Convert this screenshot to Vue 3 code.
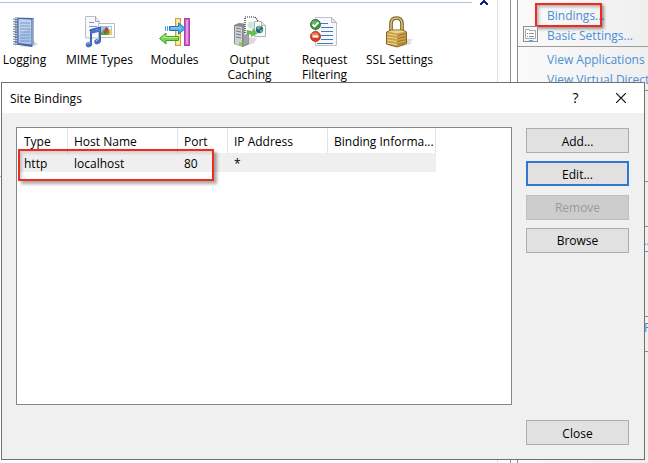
<script setup>
const features = [
  { id: 'logging', label: 'Logging' },
  { id: 'mime', label: 'MIME Types' },
  { id: 'modules', label: 'Modules' },
  { id: 'caching', label: 'Output Caching' },
  { id: 'filtering', label: 'Request Filtering' },
  { id: 'ssl', label: 'SSL Settings' },
]
const columns = ['Type', 'Host Name', 'Port', 'IP Address', 'Binding Informa...']
const bindings = [['http', 'localhost', '80', '*', '']]
</script>

<template>
  <div class="page">
    <main class="features">
      <div class="group-line">
        <span class="rule"></span>
        <svg class="chevron" viewBox="0 0 8 5"><path d="M3 0h2v1h1v1h1v1h1v2H6V4H5V3H3v1H2v1H0V3h1V2h1V1h1z" fill="#14248c" /></svg>
      </div>
      <div class="feature-grid">
        <a v-for="f in features" :key="f.id" class="feature" href="#">
          <svg v-if="f.id === 'logging'" class="icon" viewBox="0 0 32 32">
            <path d="M25 25l4 3-3 2-14 1z" fill="#999" opacity=".35" />
            <path d="M6 1.500L24.500 2v26.500L23 31 6 28.500z" fill="#4d66a5" />
            <path d="M9.500 3L22.500 3.500v25L9.500 27z" fill="#a9c4e6" />
            <path d="M10 3.500L22 4v8L10 19z" fill="#cbdcf1" opacity=".7" />
            <path d="M11 7h10M11 10h10M11 13h10M11 16h10M11 19h10M11 22h10M11 25h10" stroke="#6f91c3" stroke-width=".9" />
            <path d="M8 2v26" stroke="#7e94c7" />
            <path d="M23.500 3v27" stroke="#9aa9d4" stroke-width=".8" />
            <path d="M6 2v27" stroke="#fff" stroke-width="4" stroke-dasharray="1 1.500" />
            <path d="M6 2.500v27" stroke="#7d899f" stroke-width="3.600" stroke-dasharray="1.200 1.300" />
          </svg>
          <svg v-else-if="f.id === 'mime'" class="icon" viewBox="0 0 32 32">
            <path d="M1.500 .5h10l4 5V22h-14z" fill="#f8f9fa" stroke="#bdbfc3" />
            <path d="M11.500 .5v5h4" fill="#e4e6e9" stroke="#a4a7ad" />
            <path d="M5 6.500h5M5 10.500h8M5 14.500h8" stroke="#7895cd" />
            <rect x="14.500" y="7.500" width="16" height="14" fill="#fff" stroke="#b9bec7" />
            <rect x="17" y="10" width="11" height="9" fill="#8fc8ef" />
            <path d="M17 16q3-4 5 0l6-3v6H17z" fill="#e8cf61" />
            <path d="M17 17l3-4 2 3 3-1v4h-8z" fill="#4eaa43" />
            <path d="M20 17l1-5 2-1 3 6-3-2-1 3z" fill="#cb392d" />
            <circle cx="26" cy="12" r="1.200" fill="#fff" />
            <path d="M7 28V14l9-2.500v14" fill="none" stroke="#3e63b5" stroke-width="2" />
            <path d="M7 15l9-2.500v3L7 18z" fill="#5275c1" />
            <ellipse cx="5" cy="28.500" rx="3.300" ry="2.700" fill="#4c70be" transform="rotate(-22 5 28.500)" />
            <ellipse cx="13.500" cy="25.500" rx="3.300" ry="2.700" fill="#4c70be" transform="rotate(-22 13.500 25.500)" />
            <path d="M3.500 28q1-1.500 2.500-1.500M12 25q1-1.500 2.500-1.500" fill="none" stroke="#c3d6fa" />
          </svg>
          <svg v-else-if="f.id === 'modules'" class="icon" viewBox="0 0 32 32">
            <rect x="16.500" y="2.500" width="5" height="27" fill="#f5df79" stroke="#c8a63c" />
            <rect x="18" y="4" width="2" height="24" fill="#fff2ad" />
            <rect x="25.500" y="2.500" width="5" height="27" fill="#c95ac7" stroke="#ad40ab" />
            <rect x="27" y="4" width="2" height="24" fill="#e49ce1" />
            <path d="M10.500 10.500h9V7l7 5.500-7 5.500v-3.500h-9z" fill="#53aeef" stroke="#2674b8" />
            <path d="M12 11.500h9l2 1H12z" fill="#9ad8ff" />
            <path d="M6.500 10v5M8.500 10v5" stroke="#4ba0dd" />
            <path d="M19.500 20.500H7V17L.5 22.500 7 28v-3.500h12.500z" fill="#7cd34e" stroke="#459d26" />
            <path d="M3 22l3-2.500v2h13" fill="none" stroke="#b9ef8e" />
          </svg>
          <svg v-else-if="f.id === 'caching'" class="icon" viewBox="0 0 32 32">
            <path d="M12 30l8-3 3-5-11-1z" fill="#888" opacity=".3" />
            <path d="M0 9l5-2 10 1v20l-6 3L0 28z" fill="#85898d" />
            <path d="M1 10l7 1v19l-7-2z" fill="#cfd2d4" />
            <path d="M9.500 11l5-1.500V27l-5 2.500z" fill="#a0a4a7" />
            <path d="M2 12l5 1M2 15l5 1M2 18l5 1M2 21l5 1" stroke="#777c80" />
            <path d="M5 26l3 .5v3L5 29z" fill="#82db25" />
            <path d="M10.500 19V1.500l2-1h8l4 5V9" fill="#fff" />
            <path d="M11 17V1h10l3 4v2" fill="none" stroke="#222" stroke-width="1.200" stroke-dasharray="1 1" />
            <circle cx="17" cy="9" r="3.500" fill="#cce7f3" />
            <path d="M14 9l3-3 1 3-2 3z" fill="#cceab7" />
            <path d="M20.500 5.500h7l4 4v11h-11z" fill="#fbfcfd" stroke="#aeb3b9" />
            <path d="M27.500 5.500v4h4" fill="#e5e8eb" stroke="#aeb3b9" />
            <circle cx="25.500" cy="13.500" r="3.700" fill="#265ba5" />
            <path d="M22.500 12l2-2h3l-1 2-2 2zM26 14l3-1-1 3-2 1z" fill="#6bc34c" />
            <path d="M13 14.500l6 1v-3l4 5-6 3 1-2-5-1z" fill="#60c54b" stroke="#58a940" stroke-width=".6" />
          </svg>
          <svg v-else-if="f.id === 'filtering'" class="icon" viewBox="0 0 32 32">
            <path d="M6.500 1.500h16l5 5v23h-21z" fill="#f7f8fb" stroke="#c0c2c8" />
            <path d="M22.500 1.500v5h5z" fill="#e1e3e9" stroke="#b9bbc2" />
            <path d="M12 7.500h7M12 11.500h12M12 15.500h12M12 19.500h12M12 23.500h12M8 27.500h16" stroke="#4779b9" stroke-width="1.200" />
            <circle cx="6.500" cy="8.500" r="5" fill="#369344" stroke="#337c3b" />
            <ellipse cx="6" cy="6.500" rx="3.500" ry="2" fill="#7ebd7f" opacity=".7" />
            <path d="M3.500 8.500l2 2 4-4" fill="none" stroke="#fff" stroke-width="1.800" />
            <circle cx="6.500" cy="20.500" r="5" fill="#d83d20" stroke="#bd4027" />
            <ellipse cx="6" cy="18.500" rx="3.500" ry="2" fill="#ef9776" opacity=".7" />
            <path d="M3.500 20.500h6" stroke="#fff" stroke-width="2.200" />
          </svg>
          <svg v-else class="icon" viewBox="0 0 32 32">
            <path d="M22 23h7l-3 3 2 1-4 2-9 2z" fill="#777" opacity=".25" />
            <path d="M7 17V8q0-6 5.500-6T18 8v9" fill="none" stroke="#735a22" stroke-width="3.600" />
            <path d="M7 16V8q0-6 5.500-6T18 8v8" fill="none" stroke="#dcc47a" stroke-width="1.600" />
            <path d="M2.500 16l5-2H19l3.500 2v11.500L13 31 2.500 28z" fill="#c9a148" stroke="#86611c" />
            <path d="M4 15.500l4-1h10l3 1-8 2z" fill="#ecd58b" />
            <path d="M3 18l10 1.500M3 21l10 1.500M3 24l10 1.500M3 27l10 1.500" stroke="#efd58a" />
            <path d="M13.500 19.500l9-2M13.500 22.500l9-2M13.500 25.500l9-2M13.500 28.500l9-2" stroke="#9c762c" />
          </svg>
          <span>{{ f.label }}</span>
        </a>
      </div>
      <div class="lower-line"></div>
    </main>

    <aside class="actions">
      <nav class="first">
        <a class="action marked" href="#">Bindings...</a>
        <a class="action" href="#">
          <svg class="settings-icon" viewBox="0 0 15 16">
            <rect x=".5" y=".5" width="14" height="15" fill="#f5f6f7" stroke="#8d9297" />
            <path d="M2.500 3.500h4v1h6v8h-10z" fill="#fff" stroke="#a3a8ac" />
            <path d="M4 7.500h1M6 7.500h5M4 10.500h1M6 10.500h5" stroke="#8b9297" />
            <path d="M6 14.500h4" stroke="#3fb1e9" />
          </svg>Basic Settings...</a>
      </nav>
      <nav class="views">
        <a class="action" href="#">View Applications</a>
        <a class="action" href="#">View Virtual Directories</a>
      </nav>
      <div class="block block-a"></div>
      <div class="block block-b"></div>
      <div class="block block-c"><a class="edge" href="#">...</a></div>
      <div class="block block-d"></div>
      <div class="block block-e"><a class="edge end" href="#">F</a></div>
      <div class="block"></div>
    </aside>

    <section class="dialog" role="dialog" aria-labelledby="dialog-title">
      <header class="titlebar">
        <h1 id="dialog-title">Site Bindings</h1>
        <button class="caption" type="button" aria-label="Help">?</button>
        <button class="caption" type="button" aria-label="Close window">
          <svg class="cross" viewBox="0 0 10 10"><path d="M0 0l10 10M10 0L0 10" stroke="#111" stroke-width="1.200" /></svg>
        </button>
      </header>
      <div class="content">
        <div class="list">
          <table>
            <colgroup><col class="c1" /><col class="c2" /><col class="c1" /><col class="c4" /><col class="c5" /></colgroup>
            <thead>
              <tr><th v-for="c in columns" :key="c" scope="col">{{ c }}</th></tr>
            </thead>
            <tbody>
              <tr v-for="(row, i) in bindings" :key="i">
                <td v-for="(cell, j) in row" :key="j">{{ cell }}</td>
              </tr>
            </tbody>
          </table>
          <div class="highlight"></div>
        </div>
        <div class="side">
          <div class="buttons">
            <button class="btn" type="button">Add...</button>
            <button class="btn primary" type="button">Edit...</button>
            <button class="btn" type="button" disabled>Remove</button>
            <button class="btn" type="button">Browse</button>
          </div>
          <button class="btn" type="button">Close</button>
        </div>
      </div>
    </section>
  </div>
</template>

<style>
body {
  margin: 0;
}
</style>

<style scoped>
*,
*::after {
  box-sizing: border-box;
}
.page {
  position: relative;
  display: flex;
  height: 100vh;
  overflow: hidden;
  background: #fff;
  color: #000;
  font: 12px/15px "Segoe UI", "Open Sans", "Noto Sans", sans-serif;
}
a {
  color: inherit;
  text-decoration: none;
}
.features {
  flex: 1;
  min-width: 0;
  margin-right: 12px;
  border-right: 1px solid #dcdfe9;
  overflow: hidden;
}
.group-line {
  display: flex;
  gap: 8px;
  height: 16px;
  padding-right: 9px;
}
.rule {
  flex: 1;
  height: 3px;
  border-bottom: 1px solid #b2c1e6;
}
.chevron {
  width: 8px;
  height: 5px;
}
.feature-grid {
  display: grid;
  grid-template-columns: repeat(6, 75px);
  margin-left: -13px;
}
.feature {
  display: flex;
  flex-direction: column;
  align-items: center;
  gap: 4px;
  padding: 0 10px;
  text-align: center;
}
.feature span {
  width: min-content;
}
.feature:nth-child(2) span,
.feature:nth-child(6) span {
  white-space: nowrap;
}
.icon {
  width: 32px;
  height: 32px;
  flex: none;
}
.lower-line {
  margin-top: 94px;
  border-top: 1px solid #9fc3e6;
}
.actions {
  width: 138px;
  flex: none;
  border-left: 1px solid #8c8c8c;
  padding-left: 6px;
  background: #fff;
  color: #4a8fd6;
  overflow: hidden;
}
.first,
.views,
.block {
  border-left: 1px solid #8c8c8c;
  background: linear-gradient(90deg, #fafafa, #efefef);
}
.first {
  height: 46px;
  padding-top: 6px;
}
.views {
  height: 44px;
  padding-top: 3px;
  border-top: 1px solid #9c9c9c;
}
.action {
  position: relative;
  display: block;
  height: 20px;
  padding-left: 29px;
  line-height: 20px;
  white-space: nowrap;
}
.marked::after {
  content: "";
  position: absolute;
  left: 17px;
  top: -3px;
  width: 67px;
  height: 24px;
  border: 2px solid #ee2b1c;
  box-shadow: 2px 2px 3px #0006, inset 2px 2px 3px #0004;
}
.settings-icon {
  position: absolute;
  left: 5px;
  top: 0;
  width: 15px;
  height: 16px;
}
.block {
  border-top: 1px solid #8c8c8c;
  min-height: 112px;
}
.block-a {
  height: 91px;
  min-height: 0;
}
.block-b {
  height: 45px;
  min-height: 0;
}
.block-c {
  height: 25px;
  min-height: 0;
  padding-top: 6px;
}
.block-d {
  height: 65px;
  min-height: 0;
}
.block-e {
  height: 35px;
  min-height: 0;
  padding-top: 3px;
}
.edge {
  display: block;
  padding-left: 122px;
}
.end {
  padding-left: 126px;
}
.dialog {
  position: absolute;
  inset: 82px 3px 3px 1px;
  display: flex;
  flex-direction: column;
  border: 1px solid #707070;
  background: #f0f0f0;
}
.titlebar {
  display: flex;
  align-items: center;
  height: 30px;
  padding: 0 1px 0 8px;
  background: #fff;
}
h1 {
  flex: 1;
  margin: 0;
  font: inherit;
}
.caption {
  width: 45px;
  height: 30px;
  padding: 0;
  border: 0;
  background: none;
  color: #000;
  font: 14px/28px "Segoe UI", "Open Sans", sans-serif;
}
.cross {
  width: 10px;
  height: 10px;
}
.content {
  flex: 1;
  display: flex;
  gap: 14px;
  padding: 14px 15px 14px 14px;
}
.list {
  position: relative;
  flex: 1;
  margin-bottom: 40px;
  padding: 0 1px;
  border: 1px solid #828790;
  background: #fff;
}
table {
  width: 418px;
  table-layout: fixed;
  border-collapse: collapse;
}
.c1 {
  width: 50px;
}
.c2 {
  width: 110px;
}
.c4 {
  width: 100px;
}
.c5 {
  width: 108px;
}
th,
td {
  padding: 0 0 0 6px;
  font-weight: 400;
  text-align: left;
  white-space: nowrap;
}
th {
  height: 25px;
  padding-top: 2px;
  background: linear-gradient(#e4e4e4, #e4e4e4) right / 1px 100% no-repeat;
}
td {
  height: 19px;
  padding-top: 1px;
  background: #efefef;
}
.highlight {
  position: absolute;
  left: 1px;
  top: 21px;
  width: 196px;
  height: 32px;
  border: 2px solid #ee2b1c;
  box-shadow: 3px 3px 3px #0005, inset 2px 2px 3px #0003;
}
.side {
  width: 103px;
  display: flex;
  flex-direction: column;
  justify-content: space-between;
  padding-top: 1px;
}
.buttons {
  display: flex;
  flex-direction: column;
  justify-content: space-between;
  height: 125px;
}
.btn {
  width: 100%;
  height: 25px;
  padding: 1px 0 0;
  border: 1px solid #adadad;
  background: #e1e1e1;
  color: #000;
  font: inherit;
}
.primary {
  border: 2px solid #2f77d2;
}
.btn:disabled {
  border-color: #bfbfbf;
  background: #ccc;
  color: #9b9b9b;
}
</style>
